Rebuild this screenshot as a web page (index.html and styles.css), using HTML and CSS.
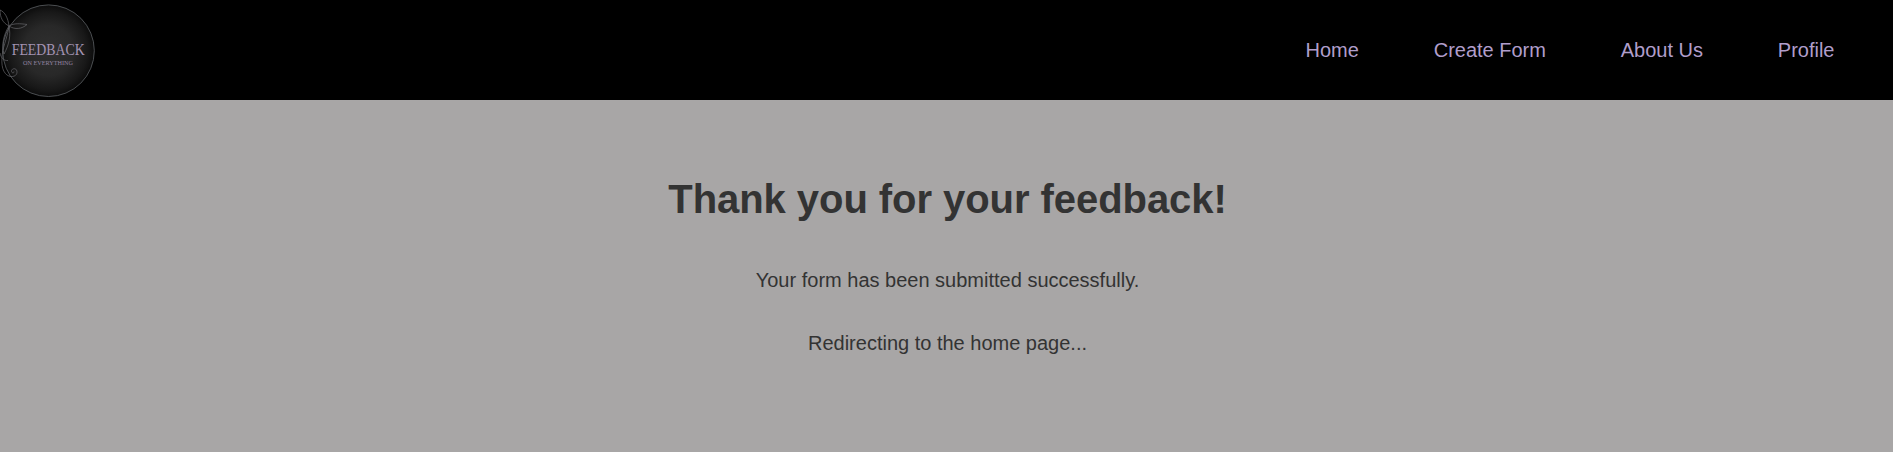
FILE: index.html
```html
<!DOCTYPE html>
<html lang="en">
<head>
<meta charset="utf-8">
<title>Thank you</title>
<link rel="stylesheet" href="styles.css">
</head>
<body>
<header class="navbar">
  <a class="logo" href="#">
    <svg width="100" height="100" viewBox="0 0 100 100" role="img" aria-label="Feedback on everything">
      <defs>
        <radialGradient id="disc">
          <stop offset="0" stop-color="#303030"/>
          <stop offset=".55" stop-color="#282828"/>
          <stop offset=".85" stop-color="#181818"/>
          <stop offset="1" stop-color="#0c0c0c"/>
        </radialGradient>
      </defs>
      <circle cx="48.5" cy="50.7" r="45.8" fill="url(#disc)" stroke="#5c6063" stroke-width=".8"/>
      <g class="vine">
        <path d="M9 26C8 18 5 12 0 10C0 18 3 23 9 26Z"/>
        <path d="M9 26C14 23 20 23.500 27 24.500C22 29 15 30 9 26Z"/>
        <path d="M9 26C11 36 9 45 4 54C1 45 4 34 9 26Z"/>
        <path d="M9 26C7 40 2 48 2 58C1 69 5 76 11 76.500C16 77 18 73 16.500 70C15 67.500 11 69 11.500 71.500C12 73.500 14.500 73 14 71.500"/>
        <path d="M0 53C1 58 4 61 8 60.500"/>
      </g>
      <text class="logo-name" x="11.700" y="54.800" textLength="73" lengthAdjust="spacingAndGlyphs">FEEDBACK</text>
      <text class="logo-tag" x="23" y="64.800" textLength="50" lengthAdjust="spacingAndGlyphs">ON EVERYTHING</text>
    </svg>
  </a>
  <nav class="links">
    <a href="#">Home</a>
    <a href="#">Create Form</a>
    <a href="#">About Us</a>
    <a href="#">Profile</a>
  </nav>
</header>
<main class="message">
  <h1>Thank you for your feedback!</h1>
  <p>Your form has been submitted successfully.</p>
  <p>Redirecting to the home page...</p>
</main>
</body>
</html>
```
FILE: styles.css
```css
body {
  margin: 0;
  min-height: 100vh;
  background: #a8a6a6;
  color: #333;
  font-family: "Liberation Sans", Arial, sans-serif;
  font-size: 20px;
}
.navbar {
  display: flex;
  align-items: center;
  justify-content: space-between;
  height: 100px;
  background: #000;
}
.logo, .logo svg { display: block; }
.links {
  display: flex;
  gap: 74.800px;
  padding-right: 58.500px;
}
.links a {
  color: #b09ecb;
  text-decoration: none;
}
.message {
  padding: 76px 0 0 2px;
  text-align: center;
}
.message h1 {
  margin: 0 0 47px;
  font-size: 40px;
  line-height: 46px;
  letter-spacing: -.06px;
}
.message p {
  margin: 0 0 40px;
  line-height: 23px;
}
.vine {
  fill: none;
  stroke: #65666a;
  stroke-width: .7;
}
.logo-name {
  fill: #a393b3;
  font-family: "Liberation Serif", serif;
  font-size: 17px;
}
.logo-tag {
  fill: #9384a2;
  font-family: "Liberation Serif", serif;
  font-size: 7px;
}
```
